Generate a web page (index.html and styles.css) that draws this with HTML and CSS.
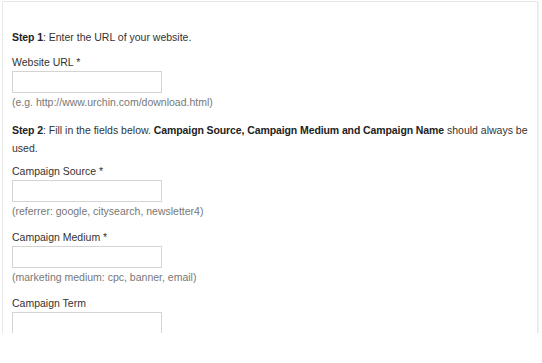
FILE: index.html
```html
<!DOCTYPE html>
<html lang="en">
  <head>
    <meta charset="UTF-8" />
    <meta name="viewport" content="width=device-width, initial-scale=1.0" />
    <link rel="stylesheet" href="styles.css">
    <title>URL Builder</title>
  </head>
  <body>
    <div class="builder">
      <p class="builder__step builder__step--first">
        <b>Step 1</b>: Enter the URL of your website.
      </p>
      <div class="builder__field">
        <label for="url">Website URL *</label>
        <input type="text" id="url" />
        <span class="builder__hint">(e.g. http://www.urchin.com/download.html)</span>
      </div>

      <p class="builder__step">
        <b>Step 2</b>: Fill in the fields below.
        <b>Campaign Source, Campaign Medium and Campaign Name</b> should always
        be used.
      </p>
      <div class="builder__field">
        <label for="source">Campaign Source *</label>
        <input type="text" id="source" />
        <span class="builder__hint">(referrer: google, citysearch, newsletter4)</span>
      </div>
      <div class="builder__field">
        <label for="medium">Campaign Medium *</label>
        <input type="text" id="medium" />
        <span class="builder__hint">(marketing medium: cpc, banner, email)</span>
      </div>
      <div class="builder__field">
        <label for="term">Campaign Term</label>
        <input type="text" id="term" class="builder__torn" />
      </div>
    </div>
  </body>
</html>
```

FILE: styles.css
```css
* {
  margin: 0;
  padding: 0;
  box-sizing: border-box;
}

html,
body {
  background: #fff;
}

body {
  font-family: "Liberation Sans", Arial, sans-serif;
  font-size: 10.5px;
  line-height: 18px;
  color: #333;
}

.builder {
  margin: 1px 4px 0 2px;
  height: 332px;
  overflow: hidden;
  border: 1px solid #e8e8e8;
  border-bottom: none;
  box-shadow: 1px 1px 1px #f2f2f2;
  padding: 26px 0 0 9px;
}

.builder__step {
  padding-top: 2px;
  margin-bottom: 5px;
  max-width: 522px;
}

.builder__step--first {
  padding-top: 0;
  margin-bottom: 7px;
}

.builder__step b {
  color: #222;
  letter-spacing: -0.1px;
}

.builder__field {
  display: flex;
  flex-direction: column;
  align-items: flex-start;
  margin-bottom: 8px;
}

.builder__field label {
  display: block;
}

.builder__field input {
  width: 150px;
  height: 22px;
  border: 1px solid #d4d4d4;
  background: #fff;
  outline: none;
}

.builder__hint {
  color: #777;
}

.builder__torn {
  border-bottom: none !important;
  height: 21px !important;
  background: repeating-linear-gradient(90deg, #d4d4d4 0 8px, transparent 8px 24px) no-repeat left bottom / 100% 1px;
}
```
